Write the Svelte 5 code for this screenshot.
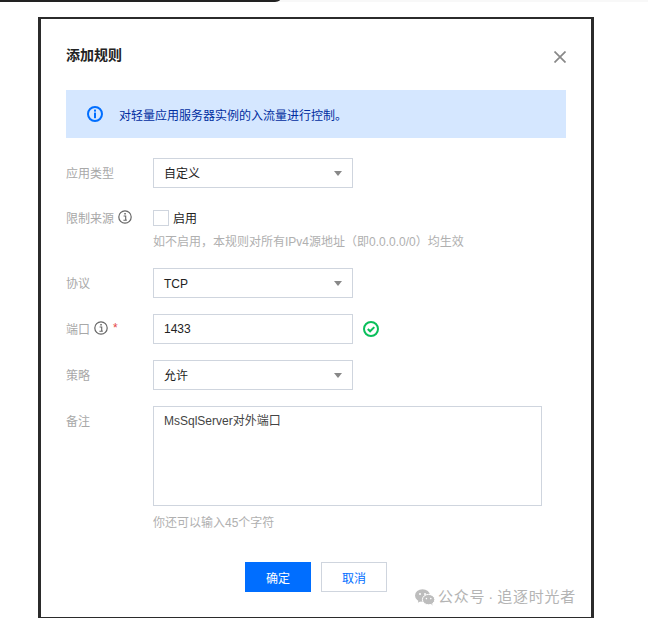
<script lang="ts">
  const protocolOptions = [{ label: '协议', value: 'TCP' }]
  const remaining = 45
</script>

<div class="page">
  <div class="topline"><div class="topline-dark"></div></div>

  <div class="modal">
    <button class="close" aria-label="关闭">
      <svg width="12" height="12" viewBox="0 0 12 12"><path d="M.5 .5l11 11M11.500 .5l-11 11" fill="none" stroke="#888" stroke-width="1.7" /></svg>
    </button>
    <h2 class="title">添加规则</h2>

    <div class="alert">
      <svg class="alert-icon" width="16" height="16" viewBox="0 0 16 16">
        <circle cx="8" cy="8" r="7" fill="none" stroke="#006eff" stroke-width="2" />
        <rect x="7" y="3.6" width="2" height="2" fill="#006eff" />
        <rect x="7" y="6.6" width="2" height="5.6" fill="#006eff" />
      </svg>
      <span>对轻量应用服务器实例的入流量进行控制。</span>
    </div>

    <div class="form">
      <div class="label">应用类型</div>
      <div class="select">自定义<i class="arrow"></i></div>

      <div class="label short">限制来源
        <svg class="help" width="14" height="14" viewBox="0 0 14 14">
          <circle cx="7" cy="7" r="6.2" fill="none" stroke="#666" stroke-width="1.2" />
          <rect x="6.3" y="3" width="1.5" height="1.5" fill="#666" />
          <path d="M5.6 6h2.1v4h1M5.4 10.2h3.4" fill="none" stroke="#666" stroke-width="1.1" />
        </svg>
      </div>
      <div>
        <label class="check"><span class="box"></span><span class="check-text">启用</span></label>
        <div class="hint">如不启用，本规则对所有IPv4源地址（即0.0.0.0/0）均生效</div>
      </div>

      {#each protocolOptions as opt}
        <div class="label">{opt.label}</div>
        <div class="select">{opt.value}<i class="arrow"></i></div>
      {/each}

      <div class="label">端口
        <svg class="help" width="14" height="14" viewBox="0 0 14 14">
          <circle cx="7" cy="7" r="6.2" fill="none" stroke="#666" stroke-width="1.2" />
          <rect x="6.3" y="3" width="1.5" height="1.5" fill="#666" />
          <path d="M5.6 6h2.1v4h1M5.4 10.2h3.4" fill="none" stroke="#666" stroke-width="1.1" />
        </svg>
        <span class="star">*</span>
      </div>
      <div class="port-row">
        <div class="select port">1433</div>
        <svg width="16" height="16" viewBox="0 0 16 16">
          <circle cx="8" cy="8" r="7" fill="none" stroke="#0abf5b" stroke-width="2" />
          <path d="M4.8 8l2.3 2.3 4.2-4.2" fill="none" stroke="#0abf5b" stroke-width="2" />
        </svg>
      </div>

      <div class="label">策略</div>
      <div class="select">允许<i class="arrow"></i></div>

      <div class="label">备注</div>
      <div>
        <div class="textarea">MsSqlServer对外端口</div>
        <div class="hint count">你还可以输入{remaining}个字符</div>
      </div>
    </div>

    <div class="actions">
      <button class="btn primary">确定</button>
      <button class="btn">取消</button>
    </div>
  </div>

  <div class="watermark">
    <svg width="20" height="17" viewBox="0 0 20 17">
      <ellipse cx="7.5" cy="6.5" rx="7.5" ry="6.3" fill="#bdbdbd" />
      <path d="M3.5 10.5l-.6 3.2 3.4-2z" fill="#bdbdbd" />
      <ellipse cx="13.6" cy="10.6" rx="6.2" ry="5.2" fill="#bdbdbd" stroke="#fff" stroke-width="1" />
      <path d="M16 14.5l1.4 2.2-.2-3z" fill="#bdbdbd" />
      <circle cx="5" cy="5" r="1" fill="#fff" />
      <circle cx="10" cy="5" r="1" fill="#fff" />
      <circle cx="11.4" cy="9.6" r=".8" fill="#fff" />
      <circle cx="15.8" cy="9.6" r=".8" fill="#fff" />
    </svg>
    <span>公众号 · 追逐时光者</span>
  </div>
</div>

<style>
  :global(body) {
    margin: 0;
    background: #fff;
  }

  .page {
    position: relative;
    width: 648px;
    height: 626px;
    overflow: hidden;
    font-family: "Liberation Sans", "Noto Sans CJK SC", sans-serif;
    font-size: 12px;
    color: #000;
  }

  .topline {
    height: 2px;
    background: #f8f8f8;
  }

  .topline-dark {
    width: 280px;
    height: 2px;
    background: #222;
    border-bottom-right-radius: 8px 2px;
  }

  .modal {
    position: relative;
    box-sizing: border-box;
    width: 556px;
    height: 601px;
    margin: 15px 0 0 38px;
    padding: 26px 25px 0;
    background: #fff;
    border: solid #2b2b2b;
    border-width: 2px 3px 1px;
  }

  .close {
    position: absolute;
    top: 32px;
    right: 25px;
    padding: 0;
    border: 0;
    background: none;
    line-height: 0;
  }

  .title {
    margin: 0;
    font-size: 14px;
    line-height: 20px;
    font-weight: 700;
    color: #222;
  }

  .alert {
    display: flex;
    align-items: center;
    gap: 16px;
    height: 48px;
    margin: 25px 0 20px;
    padding-left: 21px;
    background: #d5e7ff;
    color: #002da0;
  }

  .form {
    display: grid;
    grid-template-columns: 87px 1fr;
    row-gap: 16px;
  }

  .label {
    box-sizing: border-box;
    display: flex;
    align-items: center;
    gap: 4px;
    height: 30px;
    padding-bottom: 2px;
    color: #a8a8a8;
  }

  .label.short {
    height: 28px;
  }

  .help {
    flex: none;
  }

  .star {
    color: #e54545;
    margin-left: 1px;
  }

  .select {
    position: relative;
    box-sizing: border-box;
    width: 200px;
    height: 30px;
    padding: 0 10px;
    border: 1px solid #cfd5de;
    line-height: 30px;
    color: #222;
  }

  .select.port {
    line-height: 28px;
  }

  .arrow {
    position: absolute;
    top: 12px;
    right: 10px;
    border-style: solid;
    border-width: 5px 4px 0;
    border-color: #888 transparent transparent;
  }

  .check {
    display: flex;
    align-items: center;
    gap: 4px;
    height: 28px;
    color: #222;
  }

  .check-text {
    margin-top: -2px;
  }

  .box {
    box-sizing: border-box;
    width: 16px;
    height: 16px;
    border: 1px solid #cfd5de;
  }

  .hint {
    line-height: 20px;
    color: #b0b0b0;
  }

  .count {
    margin-top: 7px;
  }

  .port-row {
    display: flex;
    align-items: center;
    gap: 10px;
  }

  .textarea {
    box-sizing: border-box;
    width: 389px;
    height: 100px;
    padding: 5px 10px;
    border: 1px solid #cfd5de;
    line-height: 18px;
    color: #444;
  }

  .actions {
    display: flex;
    justify-content: center;
    gap: 10px;
    margin-top: 29px;
  }

  .btn {
    box-sizing: border-box;
    width: 66px;
    height: 30px;
    padding: 0;
    border: 1px solid #cfd5de;
    background: #fff;
    color: #006eff;
    font: inherit;
  }

  .btn.primary {
    border-color: #006eff;
    background: #006eff;
    color: #fff;
  }

  .watermark {
    position: absolute;
    left: 415px;
    top: 587px;
    display: flex;
    align-items: center;
    gap: 3px;
    font-size: 15px;
    letter-spacing: 0.8px;
    word-spacing: -2px;
    line-height: 20px;
    color: #b4b4b4;
  }
</style>
